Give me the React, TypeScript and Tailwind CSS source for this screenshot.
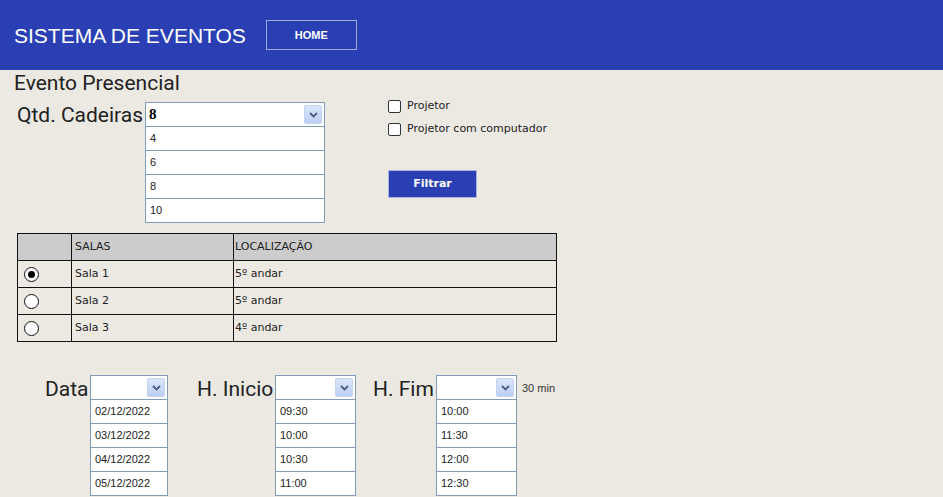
import React from "react";

const SKETCH = { fontFamily: '"DejaVu Sans", sans-serif' };
const ROBOTO = { fontFamily: 'Roboto, "Noto Sans", sans-serif' };
const ARIAL = { fontFamily: '"Liberation Sans", Arial, sans-serif' };

const SALAS = [
  { nome: "Sala 1", local: "5º andar", checked: true },
  { nome: "Sala 2", local: "5º andar", checked: false },
  { nome: "Sala 3", local: "4º andar", checked: false },
];

function Chevron() {
  return (
    <svg width="9" height="6" viewBox="0 0 9 6" className="block">
      <path d="M1 1 L4.5 4.5 L8 1" fill="none" stroke="#4a5d85" strokeWidth="1.8" />
    </svg>
  );
}

function Dropdown({
  width,
  value,
  options,
  valueStyle,
}: {
  width: string;
  value?: string;
  options: string[];
  valueStyle?: React.CSSProperties;
}) {
  return (
    <div className={`${width} flex flex-col`}>
      <div className="h-[25px] bg-white border border-[#7f9db9] flex items-center justify-between pl-[3px] pr-[2px]">
        <span className="text-[15px] font-bold text-black" style={valueStyle}>
          {value}
        </span>
        <span className="w-[18px] h-[19px] bg-gradient-to-b from-[#dbe6fb] to-[#bccff3] border border-[#c3d3f2] rounded-[2px] flex items-center justify-center">
          <Chevron />
        </span>
      </div>
      {options.map((o) => (
        <div
          key={o}
          className="h-[24px] bg-white border border-t-0 border-[#7f9db9] flex items-center pl-[4px] text-[11px] text-[#222]"
          style={ARIAL}
        >
          {o}
        </div>
      ))}
    </div>
  );
}

function Checkbox({ label }: { label: string }) {
  return (
    <label className="flex items-center gap-[6px] h-[14px]">
      <span className="w-[13px] h-[13px] border-[1.5px] border-[#333] rounded-[2px] bg-white" />
      <span className="text-[11px] text-[#222]" style={SKETCH}>
        {label}
      </span>
    </label>
  );
}

function Radio({ checked }: { checked: boolean }) {
  return (
    <span className="w-[15px] h-[15px] rounded-full border-[1.5px] border-[#111] bg-white flex items-center justify-center">
      {checked && <span className="w-[7px] h-[7px] rounded-full bg-black" />}
    </span>
  );
}

export default function App() {
  return (
    <div className="w-[943px] h-[497px] overflow-hidden bg-[#ece9e3]">
      <header className="h-[70px] bg-[#2b3fb4] flex items-center pl-[14px]">
        <h1 className="text-[21px] text-white leading-none" style={ARIAL}>
          SISTEMA DE EVENTOS
        </h1>
        <button
          className="ml-[20px] w-[91px] h-[30px] border-[1.5px] border-white/55 text-white text-[11px] font-bold flex items-center justify-center"
          style={ARIAL}
        >
          HOME
        </button>
      </header>

      <main className="pl-[14px]">
        <div className="flex">
          <div className="w-[374px] flex flex-col">
            <h2 className="text-[21px] leading-[24px] text-[#222] mt-[1px]" style={ROBOTO}>
              Evento Presencial
            </h2>
            <div className="flex items-start mt-[7px]">
              <span
                className="w-[131px] pl-[3px] text-[21px] leading-[24px] text-[#222] mt-[1px] whitespace-nowrap"
                style={ROBOTO}
              >
                Qtd. Cadeiras
              </span>
              <Dropdown
                width="w-[180px]"
                value="8"
                options={["4", "6", "8", "10"]}
                valueStyle={{ fontFamily: '"Liberation Serif", serif' }}
              />
            </div>
          </div>
          <div className="flex flex-col pt-[29px]">
            <div className="flex flex-col gap-[9px]">
              <Checkbox label="Projetor" />
              <Checkbox label="Projetor com computador" />
            </div>
            <button
              className="mt-[34px] w-[89px] h-[28px] bg-[#2b3fb4] border border-white/60 text-white text-[11px] font-bold"
              style={SKETCH}
            >
              Filtrar
            </button>
          </div>
        </div>

        <table
          className="mt-[10px] ml-[3px] w-[540px] border-collapse border-[1.5px] border-[#111] text-[11px] text-[#222]"
          style={SKETCH}
        >
          <thead>
            <tr className="h-[27px] bg-[#cccccc]">
              <th className="w-[54px] border border-[#111]" />
              <th className="w-[162px] border border-[#111] text-left font-normal pl-[3px]">SALAS</th>
              <th className="border border-[#111] text-left font-normal pl-[1px]">LOCALIZAÇÃO</th>
            </tr>
          </thead>
          <tbody>
            {SALAS.map((s) => (
              <tr key={s.nome} className="h-[27px]">
                <td className="border border-[#111] pl-[6px]">
                  <Radio checked={s.checked} />
                </td>
                <td className="border border-[#111] pl-[3px]">{s.nome}</td>
                <td className="border border-[#111] pl-[1px]">{s.local}</td>
              </tr>
            ))}
          </tbody>
        </table>

        <div className="flex items-start mt-[33px] pl-[31px]">
          <span className="w-[45px] text-[21px] leading-[24px] text-[#222] mt-[2px]" style={ROBOTO}>
            Data
          </span>
          <Dropdown
            width="w-[78px]"
            options={["02/12/2022", "03/12/2022", "04/12/2022", "05/12/2022"]}
          />
          <span
            className="ml-[29px] w-[78px] text-[21px] leading-[24px] text-[#222] mt-[2px] whitespace-nowrap"
            style={ROBOTO}
          >
            H. Inicio
          </span>
          <Dropdown width="w-[81px]" options={["09:30", "10:00", "10:30", "11:00"]} />
          <span
            className="ml-[17px] w-[63px] text-[21px] leading-[24px] text-[#222] mt-[2px] whitespace-nowrap"
            style={ROBOTO}
          >
            H. Fim
          </span>
          <Dropdown width="w-[81px]" options={["10:00", "11:30", "12:00", "12:30"]} />
          <span className="ml-[5px] mt-[5px] text-[11px] text-[#333]" style={ARIAL}>
            30 min
          </span>
        </div>
      </main>
    </div>
  );
}
